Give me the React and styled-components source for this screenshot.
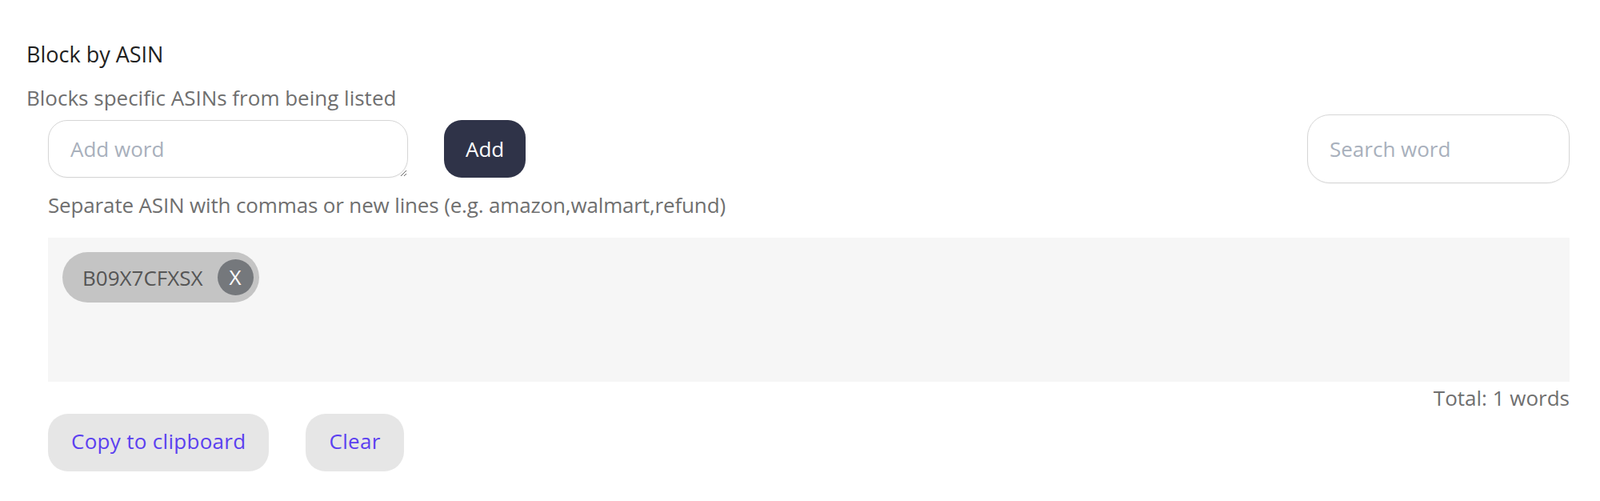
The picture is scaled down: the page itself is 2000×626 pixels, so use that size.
import React, { useState } from "react";
import styled, { createGlobalStyle } from "styled-components";

const GlobalStyle = createGlobalStyle`
  body {
    margin: 0;
    background: #ffffff;
    font-family: "Open Sans", "Liberation Sans", sans-serif;
  }
  * { box-sizing: border-box; }
`;

const App = () => {
  const [words, setWords] = useState(["B09X7CFXSX"]);
  const [draft, setDraft] = useState("");
  const [search, setSearch] = useState("");

  const addWords = () => {
    const parts = draft
      .split(/[,\n]/)
      .map((w) => w.trim())
      .filter(Boolean);
    if (parts.length) setWords([...words, ...parts]);
    setDraft("");
  };

  const removeWord = (idx) => setWords(words.filter((_, i) => i !== idx));

  const shown = words.filter((w) =>
    w.toLowerCase().includes(search.toLowerCase())
  );

  return (
    <Page>
      <GlobalStyle />
      <Title>Block by ASIN</Title>
      <Subtitle>Blocks specific ASINs from being listed</Subtitle>
      <Body>
        <InputRow>
          <WordInput
            placeholder="Add word"
            value={draft}
            onChange={(e) => setDraft(e.target.value)}
          />
          <AddButton onClick={addWords}>Add</AddButton>
          <SearchInput
            placeholder="Search word"
            value={search}
            onChange={(e) => setSearch(e.target.value)}
          />
        </InputRow>
        <Hint>
          Separate ASIN with commas or new lines (e.g. amazon,walmart,refund)
        </Hint>
        <TagBox>
          {shown.map((w, i) => (
            <Tag key={w + i}>
              <TagText>{w}</TagText>
              <RemoveButton onClick={() => removeWord(i)}>X</RemoveButton>
            </Tag>
          ))}
        </TagBox>
        <Total>Total: {words.length} words</Total>
        <Actions>
          <GhostButton>Copy to clipboard</GhostButton>
          <GhostButton onClick={() => setWords([])}>Clear</GhostButton>
        </Actions>
      </Body>
    </Page>
  );
};

const Page = styled.div`
  padding: 50px 38px 0 33px;
  font-size: 26px;
  line-height: 36px;
`;

const Title = styled.div`
  font-size: 27px;
  color: #1f1f1f;
`;

const Subtitle = styled.div`
  margin-top: 18px;
  color: #6f6f6f;
`;

const Body = styled.div`
  padding-left: 27px;
`;

const InputRow = styled.div`
  display: flex;
  align-items: center;
  margin-top: 3px;
`;

const WordInput = styled.textarea`
  width: 450px;
  height: 72px;
  padding: 17px 27px;
  border: 1px solid #d6d6d6;
  border-radius: 24px;
  font-family: inherit;
  font-size: 26px;
  line-height: 36px;
  color: #333;
  outline: none;
  box-shadow: 0 1px 2px rgba(0, 0, 0, 0.04);

  &::placeholder {
    color: #a8b0bc;
  }
`;

const AddButton = styled.button`
  margin-left: 45px;
  height: 72px;
  padding: 0 27px;
  border: none;
  border-radius: 22px;
  background: #2f3348;
  color: #ffffff;
  font-family: inherit;
  font-size: 26px;
  cursor: pointer;
`;

const SearchInput = styled.input`
  margin-left: auto;
  width: 328px;
  height: 86px;
  padding: 0 27px;
  border: 1px solid #d6d6d6;
  border-radius: 28px;
  font-family: inherit;
  font-size: 26px;
  color: #333;
  outline: none;
  box-shadow: 0 1px 2px rgba(0, 0, 0, 0.04);

  &::placeholder {
    color: #a8b0bc;
  }
`;

const Hint = styled.div`
  margin-top: 9px;
  color: #6f6f6f;
  letter-spacing: -0.15px;
`;

const TagBox = styled.div`
  margin-top: 23px;
  height: 180px;
  padding: 18px;
  background: #f6f6f6;
  display: flex;
  flex-wrap: wrap;
  align-content: flex-start;
  gap: 12px;
`;

const Tag = styled.div`
  display: inline-flex;
  align-items: center;
  height: 63px;
  padding: 0 7px 0 25px;
  border-radius: 32px;
  background: #c4c4c4;
  gap: 18px;
`;

const TagText = styled.span`
  color: #555555;
`;

const RemoveButton = styled.button`
  width: 45px;
  height: 45px;
  padding: 0;
  border: none;
  border-radius: 50%;
  background: #75787c;
  color: #ffffff;
  font-family: inherit;
  font-size: 26px;
  line-height: 45px;
  cursor: pointer;
`;

const Total = styled.div`
  margin-top: 2px;
  text-align: right;
  color: #6f6f6f;
`;

const Actions = styled.div`
  display: flex;
  gap: 46px;
  margin-top: 2px;
`;

const GhostButton = styled.button`
  height: 72px;
  padding: 0 29px 4px;
  border: none;
  border-radius: 25px;
  background: #e6e6e6;
  color: #5b3ff0;
  font-family: inherit;
  font-size: 26px;
  letter-spacing: 0.3px;
  cursor: pointer;
`;

export default App;
